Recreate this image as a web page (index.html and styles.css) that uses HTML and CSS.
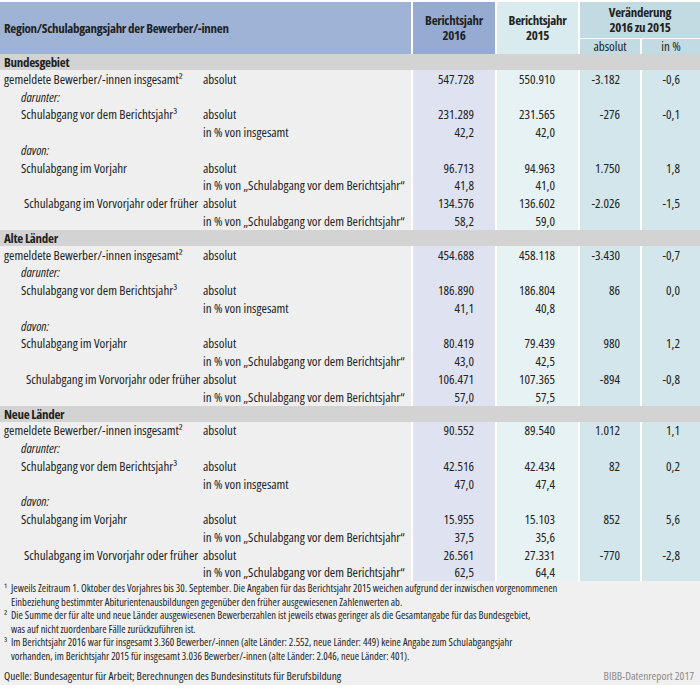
FILE: index.html
```html
<!DOCTYPE html>
<html lang="de">
<head>
<meta charset="utf-8">
<title>Bewerber/-innen nach Schulabgangsjahr</title>
<link rel="stylesheet" href="styles.css">
</head>
<body>
<div class="page">
<table class="t">
  <colgroup>
    <col class="c-label"><col class="c-unit"><col class="c-y16"><col class="c-y15"><col class="c-abs"><col class="c-pct">
  </colgroup>
  <thead>
    <tr class="h1">
      <th class="h-region" colspan="2" rowspan="2">Region/Schulabgangsjahr der Bewerber/-innen</th>
      <th class="h-16" rowspan="2">Berichtsjahr<br>2016</th>
      <th class="h-15" rowspan="2">Berichtsjahr<br>2015</th>
      <th class="h-chg" colspan="2">Veränderung<br>2016 zu 2015</th>
    </tr>
    <tr class="h2">
      <th class="h-sub h-abs">absolut</th>
      <th class="h-sub">in %</th>
    </tr>
  </thead>
  <tbody>
    <tr class="band"><td colspan="6">Bundesgebiet</td></tr>
    <tr class="r"><td class="lab">gemeldete Bewerber/-innen insgesamt²</td><td class="unit">absolut</td><td class="n16">547.728</td><td class="n15">550.910</td><td class="nab">-3.182</td><td class="npc">-0,6</td></tr>
    <tr class="r"><td class="lab ind it">darunter:</td><td class="unit"></td><td class="n16"></td><td class="n15"></td><td class="nab"></td><td class="npc"></td></tr>
    <tr class="r"><td class="lab ind">Schulabgang vor dem Berichtsjahr³</td><td class="unit">absolut</td><td class="n16">231.289</td><td class="n15">231.565</td><td class="nab">-276</td><td class="npc">-0,1</td></tr>
    <tr class="r"><td class="lab"></td><td class="unit">in % von insgesamt</td><td class="n16">42,2</td><td class="n15">42,0</td><td class="nab"></td><td class="npc"></td></tr>
    <tr class="r"><td class="lab ind it">davon:</td><td class="unit"></td><td class="n16"></td><td class="n15"></td><td class="nab"></td><td class="npc"></td></tr>
    <tr class="r"><td class="lab ind">Schulabgang im Vorjahr</td><td class="unit">absolut</td><td class="n16">96.713</td><td class="n15">94.963</td><td class="nab">1.750</td><td class="npc">1,8</td></tr>
    <tr class="r"><td class="lab"></td><td class="unit">in % von „Schulabgang vor dem Berichtsjahr“</td><td class="n16">41,8</td><td class="n15">41,0</td><td class="nab"></td><td class="npc"></td></tr>
    <tr class="r"><td class="lab ind2">Schulabgang im Vorvorjahr oder früher</td><td class="unit">absolut</td><td class="n16">134.576</td><td class="n15">136.602</td><td class="nab">-2.026</td><td class="npc">-1,5</td></tr>
    <tr class="r"><td class="lab"></td><td class="unit">in % von „Schulabgang vor dem Berichtsjahr“</td><td class="n16">58,2</td><td class="n15">59,0</td><td class="nab"></td><td class="npc"></td></tr>

    <tr class="band"><td colspan="6">Alte Länder</td></tr>
    <tr class="r"><td class="lab">gemeldete Bewerber/-innen insgesamt²</td><td class="unit">absolut</td><td class="n16">454.688</td><td class="n15">458.118</td><td class="nab">-3.430</td><td class="npc">-0,7</td></tr>
    <tr class="r"><td class="lab ind it">darunter:</td><td class="unit"></td><td class="n16"></td><td class="n15"></td><td class="nab"></td><td class="npc"></td></tr>
    <tr class="r"><td class="lab ind">Schulabgang vor dem Berichtsjahr³</td><td class="unit">absolut</td><td class="n16">186.890</td><td class="n15">186.804</td><td class="nab">86</td><td class="npc">0,0</td></tr>
    <tr class="r"><td class="lab"></td><td class="unit">in % von insgesamt</td><td class="n16">41,1</td><td class="n15">40,8</td><td class="nab"></td><td class="npc"></td></tr>
    <tr class="r"><td class="lab ind it">davon:</td><td class="unit"></td><td class="n16"></td><td class="n15"></td><td class="nab"></td><td class="npc"></td></tr>
    <tr class="r"><td class="lab ind">Schulabgang im Vorjahr</td><td class="unit">absolut</td><td class="n16">80.419</td><td class="n15">79.439</td><td class="nab">980</td><td class="npc">1,2</td></tr>
    <tr class="r"><td class="lab"></td><td class="unit">in % von „Schulabgang vor dem Berichtsjahr“</td><td class="n16">43,0</td><td class="n15">42,5</td><td class="nab"></td><td class="npc"></td></tr>
    <tr class="r"><td class="lab ind3">Schulabgang im Vorvorjahr oder früher</td><td class="unit">absolut</td><td class="n16">106.471</td><td class="n15">107.365</td><td class="nab">-894</td><td class="npc">-0,8</td></tr>
    <tr class="r"><td class="lab"></td><td class="unit">in % von „Schulabgang vor dem Berichtsjahr“</td><td class="n16">57,0</td><td class="n15">57,5</td><td class="nab"></td><td class="npc"></td></tr>

    <tr class="band"><td colspan="6">Neue Länder</td></tr>
    <tr class="r"><td class="lab">gemeldete Bewerber/-innen insgesamt²</td><td class="unit">absolut</td><td class="n16">90.552</td><td class="n15">89.540</td><td class="nab">1.012</td><td class="npc">1,1</td></tr>
    <tr class="r"><td class="lab ind it">darunter:</td><td class="unit"></td><td class="n16"></td><td class="n15"></td><td class="nab"></td><td class="npc"></td></tr>
    <tr class="r"><td class="lab ind">Schulabgang vor dem Berichtsjahr³</td><td class="unit">absolut</td><td class="n16">42.516</td><td class="n15">42.434</td><td class="nab">82</td><td class="npc">0,2</td></tr>
    <tr class="r"><td class="lab"></td><td class="unit">in % von insgesamt</td><td class="n16">47,0</td><td class="n15">47,4</td><td class="nab"></td><td class="npc"></td></tr>
    <tr class="r"><td class="lab ind it">davon:</td><td class="unit"></td><td class="n16"></td><td class="n15"></td><td class="nab"></td><td class="npc"></td></tr>
    <tr class="r"><td class="lab ind">Schulabgang im Vorjahr</td><td class="unit">absolut</td><td class="n16">15.955</td><td class="n15">15.103</td><td class="nab">852</td><td class="npc">5,6</td></tr>
    <tr class="r"><td class="lab"></td><td class="unit">in % von „Schulabgang vor dem Berichtsjahr“</td><td class="n16">37,5</td><td class="n15">35,6</td><td class="nab"></td><td class="npc"></td></tr>
    <tr class="r"><td class="lab ind2">Schulabgang im Vorvorjahr oder früher</td><td class="unit">absolut</td><td class="n16">26.561</td><td class="n15">27.331</td><td class="nab">-770</td><td class="npc">-2,8</td></tr>
    <tr class="r"><td class="lab"></td><td class="unit">in % von „Schulabgang vor dem Berichtsjahr“</td><td class="n16">62,5</td><td class="n15">64,4</td><td class="nab"></td><td class="npc"></td></tr>
  </tbody>
</table>
<div class="notes">
  <p class="fn"><span class="fn-num">¹</span>Jeweils Zeitraum 1. Oktober des Vorjahres bis 30. September. Die Angaben für das Berichtsjahr 2015 weichen aufgrund der inzwischen vorgenommenen<br>Einbeziehung bestimmter Abiturientenausbildungen gegenüber den früher ausgewiesenen Zahlenwerten ab.</p>
  <p class="fn"><span class="fn-num">²</span>Die Summe der für alte und neue Länder ausgewiesenen Bewerberzahlen ist jeweils etwas geringer als die Gesamtangabe für das Bundesgebiet,<br>was auf nicht zuordenbare Fälle zurückzuführen ist.</p>
  <p class="fn"><span class="fn-num">³</span>Im Berichtsjahr 2016 war für insgesamt 3.360 Bewerber/-innen (alte Länder: 2.552, neue Länder: 449) keine Angabe zum Schulabgangsjahr<br>vorhanden, im Berichtsjahr 2015 für insgesamt 3.036 Bewerber/-innen (alte Länder: 2.046, neue Länder: 401).</p>
  <div class="src">
    <span class="src-text">Quelle: Bundesagentur für Arbeit; Berechnungen des Bundesinstituts für Berufsbildung</span>
    <span class="credit">BIBB-Datenreport 2017</span>
  </div>
</div>
</div>
</body>
</html>
```
FILE: styles.css
```css
body {
  margin: 0;
  background: #ffffff;
  color: #222222;
  font-family: "Open Sans", "Roboto Condensed", sans-serif;
  font-stretch: 75%;
}

.page {
  width: 700px;
  padding-top: 2px;
}

.t {
  width: 700px;
  table-layout: fixed;
  border-collapse: separate;
  border-spacing: 0;
  font-size: 13px;
}

.c-label { width: 200px; }
.c-unit { width: 211px; }
.c-y16 { width: 84px; }
.c-y15 { width: 83px; }
.c-abs { width: 62px; }
.c-pct { width: 60px; }

th {
  padding: 0;
  font-weight: bold;
  letter-spacing: -0.3px;
  text-align: center;
  line-height: 15px;
  vertical-align: middle;
}

.h1 th { height: 36px; }
.h2 th { height: 15px; }

.h-region {
  background: #9fb3d7;
  text-align: left;
  padding-left: 4px;
}

.h-16 {
  background: #95abd2;
  border-left: 2px solid #ffffff;
}

.h-15 {
  background: #d9ebee;
  border-left: 2px solid #ffffff;
}

.h-chg {
  background: #c2dbe2;
  border-left: 2px solid #ffffff;
}

.h-sub {
  background: #c2dbe2;
  font-weight: normal;
  letter-spacing: 0;
  border-left: 2px solid #ffffff;
  border-top: 1px solid #ffffff;
}

.band td {
  height: 16px;
  padding: 0 0 0 4px;
  line-height: 16px;
  background: #d3d3d3;
  font-weight: bold;
  letter-spacing: -0.3px;
}

.r td {
  height: 17.75px;
  padding: 0;
  line-height: 14px;
  white-space: nowrap;
  vertical-align: middle;
}

.lab {
  background: #efefef;
  padding-left: 4px !important;
}

.lab.ind { padding-left: 21px !important; }
.lab.ind2 { padding-left: 24px !important; }
.lab.ind3 { padding-left: 26px !important; }
.it { font-style: italic; }

.unit {
  background: #efefef;
  padding-left: 3px !important;
}

.n16, .n15, .nab, .npc {
  text-align: right;
  border-left: 2px solid #ffffff;
}

.n16 { background: #dfe3f1; padding-right: 21px !important; }
.n15 { background: #e7f2f4; padding-right: 23px !important; }
.nab { background: #d3e6eb; padding-right: 20px !important; }
.npc { background: #d3e6eb; padding-right: 20px !important; }

.notes {
  background: #f0f0f0;
  padding: 1px 4px 2px 4px;
  font-size: 10.5px;
  line-height: 13.5px;
}

.fn {
  margin: 0;
  padding-left: 7px;
  white-space: nowrap;
}

.fn-num {
  display: inline-block;
  width: 6px;
  margin-left: -7px;
  margin-right: 1px;
}

.src {
  display: flex;
  justify-content: space-between;
  margin-top: 5px;
  font-size: 11.3px;
  line-height: 15px;
}

.credit {
  color: #8a8a8a;
  padding-right: 2px;
}
```
